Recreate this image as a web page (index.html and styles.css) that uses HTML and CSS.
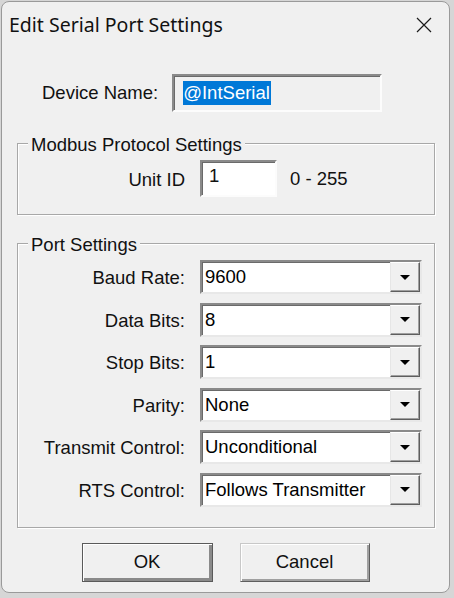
FILE: index.html
```html
<!DOCTYPE html>
<html lang="en">
<head>
    <meta charset="UTF-8">
    <meta name="viewport" content="width=device-width, initial-scale=1.0">
    <title>Edit Serial Port Settings</title>
    <link rel="stylesheet" href="styles.css">
</head>
<body>
    <div class="window">
        <div class="titlebar">
            <span class="title">Edit Serial Port Settings</span>
            <svg class="close" width="16" height="16" viewBox="0 0 16 16">
                <path d="M1 1 L15 15 M15 1 L1 15" stroke="#1a1a1a" stroke-width="1.2" fill="none"/>
            </svg>
        </div>
        <div class="content">
            <div class="device-row">
                <label class="device-label">Device Name:</label>
                <div class="field readonly"><span class="selected">@IntSerial</span></div>
            </div>

            <div class="group modbus">
                <div class="group-title">Modbus Protocol Settings</div>
                <div class="form-grid">
                    <label>Unit ID</label>
                    <div class="unit-cell">
                        <div class="field unit">1</div>
                        <span class="range">0 - 255</span>
                    </div>
                </div>
            </div>

            <div class="group port">
                <div class="group-title">Port Settings</div>
                <div class="form-grid">
                    <label>Baud Rate:</label>
                    <div class="combo"><span class="combo-text">9600</span><span class="drop"><span class="arrow"></span></span></div>
                    <label>Data Bits:</label>
                    <div class="combo"><span class="combo-text">8</span><span class="drop"><span class="arrow"></span></span></div>
                    <label>Stop Bits:</label>
                    <div class="combo"><span class="combo-text">1</span><span class="drop"><span class="arrow"></span></span></div>
                    <label>Parity:</label>
                    <div class="combo"><span class="combo-text">None</span><span class="drop"><span class="arrow"></span></span></div>
                    <label>Transmit Control:</label>
                    <div class="combo"><span class="combo-text">Unconditional</span><span class="drop"><span class="arrow"></span></span></div>
                    <label>RTS Control:</label>
                    <div class="combo"><span class="combo-text">Follows Transmitter</span><span class="drop"><span class="arrow"></span></span></div>
                </div>
            </div>

            <div class="buttons">
                <button class="btn default">OK</button>
                <button class="btn">Cancel</button>
            </div>
        </div>
    </div>
</body>
</html>
```

FILE: styles.css
```css
body {
    margin: 0;
    background: #d6d6d6;
    font-family: "Liberation Sans", Arial, sans-serif;
    font-size: 18.5px;
    color: #111;
}
.window {
    box-sizing: border-box;
    width: 449px;
    height: 592px;
    margin: 1px 0 0 1px;
    border: 1px solid #9a9a9a;
    border-radius: 8px;
    background: #f0f0f0;
    overflow: hidden;
}
.titlebar {
    height: 45px;
    display: flex;
    align-items: center;
    justify-content: space-between;
    padding: 0 17px 0 7px;
}
.title {
    font-family: "Noto Sans", sans-serif;
    font-size: 19.5px;
    color: #111;
}
.close {
    display: block;
}
.content {
    padding: 0 14px 0 15px;
}
.device-row {
    display: flex;
    align-items: center;
    margin-top: 27px;
    padding-left: 25px;
}
.device-label {
    margin-right: 14px;
}
.field {
    box-sizing: border-box;
    border: 2px solid;
    border-color: #8a8a8a #fcfcfc #fcfcfc #8a8a8a;
    box-shadow: inset 1px 1px #6a6a6a;
    background: #fff;
}
.field.readonly {
    width: 210px;
    height: 38px;
    background: #f0f0f0;
    padding: 6px 0 0 9px;
}
.selected {
    background: #0078d7;
    color: #fff;
    padding: 1px 1px 2px 0;
}
.group {
    border: 1px solid #a8a8a8;
    box-shadow: inset 1px 1px #fff, 1px 1px #fff;
}
.modbus {
    margin-top: 31px;
    padding-bottom: 17px;
}
.port {
    margin-top: 28px;
    padding-bottom: 20px;
}
.group-title {
    display: table;
    margin: -10px 0 0 10px;
    padding: 0 3px;
    line-height: 22px;
    background: #f0f0f0;
}
.form-grid {
    display: grid;
    grid-template-columns: 167px 222px;
    column-gap: 15px;
    row-gap: 8.6px;
    align-items: center;
    margin-top: 4px;
}
.form-grid label {
    text-align: right;
    padding-top: 2px;
}
.unit-cell {
    display: flex;
    align-items: center;
}
.field.unit {
    width: 77px;
    height: 37px;
    padding: 3px 0 0 7px;
}
.range {
    margin-left: 13px;
}
.combo {
    box-sizing: border-box;
    height: 34px;
    display: flex;
    align-items: stretch;
    border: 2px solid;
    border-color: #8a8a8a #e8e8e8 #e8e8e8 #8a8a8a;
    box-shadow: inset 1px 1px #6a6a6a;
    background: #fff;
}
.combo-text {
    flex: 1;
    padding: 0 0 0 3px;
    line-height: 30px;
    color: #000;
}
.drop {
    box-sizing: border-box;
    width: 30px;
    display: flex;
    align-items: center;
    justify-content: center;
    background: #f0f0f0;
    border: 1px solid;
    border-color: #fff #5e5e5e #5e5e5e #e6e6e6;
    box-shadow: inset -1px -1px #a0a0a0;
}
.arrow {
    width: 0;
    height: 0;
    border-left: 5px solid transparent;
    border-right: 5px solid transparent;
    border-top: 5px solid #000;
}
.buttons {
    display: flex;
    justify-content: center;
    gap: 27px;
    margin-top: 15px;
    padding-right: 1px;
}
.btn {
    box-sizing: border-box;
    width: 130px;
    height: 39px;
    font-family: "Liberation Sans", Arial, sans-serif;
    font-size: 18.5px;
    color: #111;
    background: #f0f0f0;
    border: 1px solid;
    border-color: #c8c8c8 #5e5e5e #5e5e5e #c8c8c8;
    box-shadow: inset 1px 1px #fff, inset -2px -2px #a0a0a0;
    padding: 0;
}
.btn.default {
    width: 131px;
    border-color: #5a5a5a;
    box-shadow: inset 1px 1px #fff, inset -3px -3px #8a8a8a;
}
```
